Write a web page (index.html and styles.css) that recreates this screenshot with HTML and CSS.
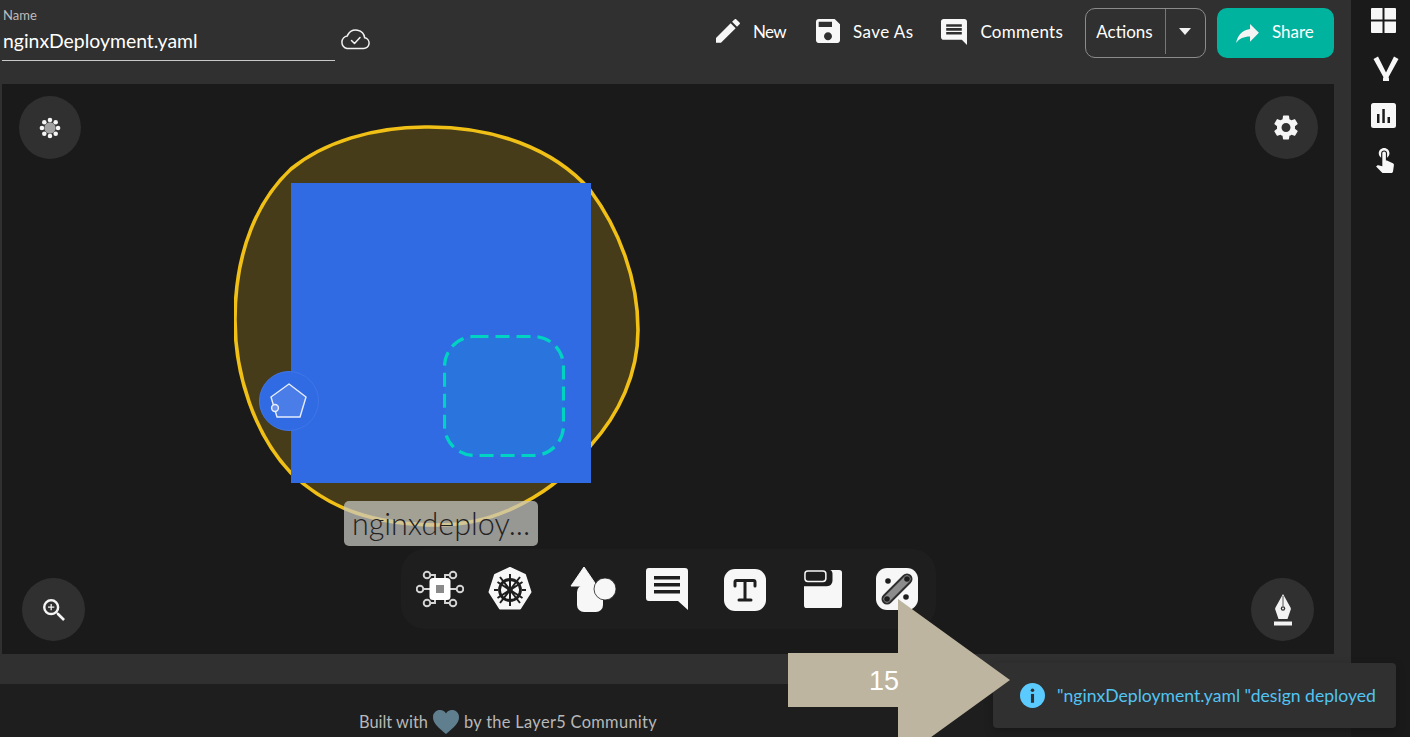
FILE: index.html
```html
<!DOCTYPE html>
<html lang="en">
<head>
<meta charset="utf-8">
<title>nginxDeployment.yaml</title>
<link rel="stylesheet" href="styles.css">
</head>
<body>
<div class="app">
  <main class="main">
    <header class="header">
      <div class="name-field">
        <label class="name-label">Name</label>
        <div class="name-value">nginxDeployment.yaml</div>
      </div>
      <svg class="cloud" viewBox="0 0 30 22" fill="none" stroke="#f2f2f2" stroke-width="1.5" stroke-linecap="round" stroke-linejoin="round"><path d="M7 20.5h16.5a5.4 5.4 0 0 0 1.2-10.7A9 9 0 0 0 8 6.5c-.3.5-.5 1-.6 1.4A6.4 6.4 0 0 0 7 20.5z"/><path d="M11.5 12.5l3 3 5.500-6"/></svg>
      <div class="spacer"></div>
      <nav class="actions">
        <button class="action act-new"><svg class="ic" viewBox="3 3 18.1 18.1"><path d="M3 17.25V21h3.75L17.81 9.94l-3.75-3.75L3 17.25zM20.71 7.04a1 1 0 0 0 0-1.41l-2.34-2.34a1 1 0 0 0-1.41 0l-1.83 1.83 3.75 3.75 1.83-1.83z"/></svg><span>New</span></button>
        <button class="action act-save"><svg class="ic" viewBox="3 3 18 18"><path d="M17 3H5c-1.11 0-2 .9-2 2v14c0 1.1.89 2 2 2h14c1.1 0 2-.9 2-2V7l-4-4zm-5 16c-1.66 0-3-1.34-3-3s1.34-3 3-3 3 1.34 3 3-1.34 3-3 3zm3-10H5V5h10v4z"/></svg><span>Save As</span></button>
        <button class="action act-comments"><svg class="ic ic-c" viewBox="2 2 20 20"><path d="M21.99 4c0-1.1-.89-2-1.99-2H4c-1.1 0-2 .9-2 2v12c0 1.1.9 2 2 2h14l4 4-.01-18zM18 14H6v-2h12v2zm0-3H6V9h12v2zm0-3H6V6h12v2z"/></svg><span>Comments</span></button>
      </nav>
      <div class="split">
        <span class="split-main">Actions</span>
        <span class="split-caret"><i class="caret"></i></span>
      </div>
      <button class="share"><svg class="ic-share" viewBox="3 5 18 15"><path d="M14 9V5l7 7-7 7v-4.1c-5 0-8.5 1.6-11 5.1 1-5 4-10 11-11z"/></svg><span>Share</span></button>
    </header>

    <section class="canvas">
      <div class="fab fab-tl">
        <svg class="fab-flower" viewBox="0 0 24 24"><g fill="#f5f5f5"><circle cx="12" cy="3.2" r="2.5"/><circle cx="12" cy="20.800" r="2.5"/><circle cx="3.200" cy="12" r="2.5"/><circle cx="20.800" cy="12" r="2.5"/><circle cx="5.800" cy="5.800" r="2.5"/><circle cx="18.200" cy="5.800" r="2.5"/><circle cx="5.800" cy="18.200" r="2.5"/><circle cx="18.200" cy="18.200" r="2.5"/></g><circle cx="12" cy="12" r="6.200" fill="#a0a0a0"/></svg>
      </div>
      <div class="fab fab-tr">
        <svg class="fab-gear" viewBox="2.5 2 19 20"><path d="M19.14 12.94c.04-.3.06-.61.06-.94 0-.32-.02-.64-.07-.94l2.03-1.58a.49.49 0 0 0 .12-.61l-1.92-3.32a.488.488 0 0 0-.59-.22l-2.39.96c-.5-.38-1.03-.7-1.62-.94l-.36-2.54a.484.484 0 0 0-.48-.41h-3.84c-.24 0-.43.17-.47.41l-.36 2.54c-.59.24-1.13.57-1.62.94l-2.39-.96c-.22-.08-.47 0-.59.22L2.74 8.87c-.12.21-.08.47.12.61l2.03 1.58c-.05.3-.09.63-.09.94s.02.64.07.94l-2.03 1.58a.49.49 0 0 0-.12.61l1.92 3.32c.12.22.37.29.59.22l2.39-.96c.5.38 1.03.7 1.62.94l.36 2.54c.05.24.24.41.48.41h3.84c.24 0 .44-.17.47-.41l.36-2.54c.59-.24 1.13-.56 1.62-.94l2.39.96c.22.08.47 0 .59-.22l1.92-3.32c.12-.22.07-.47-.12-.61l-2.01-1.58zM12 15.6c-1.98 0-3.6-1.62-3.6-3.6s1.62-3.6 3.6-3.6 3.6 1.62 3.6 3.6-1.62 3.6-3.6 3.6z"/></svg>
      </div>
      <div class="fab fab-bl">
        <svg class="fab-zoom" viewBox="3 3 17.5 17.5"><path d="M15.5 14h-.79l-.28-.27A6.471 6.471 0 0 0 16 9.5 6.5 6.5 0 1 0 9.5 16c1.61 0 3.09-.59 4.23-1.57l.27.28v.79l5 4.99L20.49 19l-4.99-5zm-6 0C7.01 14 5 11.99 5 9.5S7.01 5 9.5 5 14 7.01 14 9.5 11.99 14 9.5 14z"/><path d="M12 10h-2v2H9v-2H7V9h2V7h1v2h2v1z"/></svg>
      </div>
      <div class="fab fab-br">
        <svg class="fab-pen" viewBox="0 0 22 32"><path fill="#f2f2f2" d="M11 0l7.500 13.500c.5 1 .5 1.700 0 2.700L15.500 25h-9L3.500 16.200c-.5-1-.5-1.700 0-2.700z"/><circle cx="11" cy="14.500" r="2.200" fill="#303030"/><circle cx="11" cy="14.500" r="1" fill="#f2f2f2"/><path d="M11 2v10" stroke="#303030" stroke-width=".8"/><rect x="2" y="27.500" width="18" height="4" fill="#f2f2f2"/></svg>
      </div>

      <svg class="graph" viewBox="0 0 640 470" fill="none">
        <path class="blob" d="M191 43C260 42 320 65 356 106C385 145 404 195 404 246C404 290 385 330 357 361C335 395 275 441 205 441C140 441 95 425 57 389C20 350 1 290 1 236C1 165 25 115 57 85C90 58 140 43 191 43z"/>
      </svg>
      <div class="node-square">
        <svg class="node-dashed" viewBox="0 0 122 122"><rect x="1.500" y="1.500" width="119" height="119" rx="30" fill="#2a74dd" stroke="#00d3c1" stroke-width="3.200" stroke-dasharray="14 7"/></svg>
      </div>
      <div class="node-badge">
        <svg class="node-penta" viewBox="0 0 40 38"><path d="M20 3L37 16 31 36H8L2 16z" fill="#ffffff" fill-opacity=".12" stroke="#e6edfd" stroke-width="1.400" stroke-linejoin="round"/><circle cx="6" cy="27" r="3.400" fill="#6f93ec" stroke="#e6edfd" stroke-width="1.500"/></svg>
      </div>
      <div class="node-label">nginxdeploy...</div>

      <div class="toolbar">
        <svg class="tool t-chip" viewBox="0 0 48 42" fill="none" stroke="#d4d4d4" stroke-width="1.900"><path d="M19 14V7h-5M29 14V7h5M19 28v7h-5M29 28v7h5M14 21H7M34 21h7"/><circle cx="11" cy="7" r="3.300"/><circle cx="37" cy="7" r="3.300"/><circle cx="11" cy="35" r="3.300"/><circle cx="37" cy="35" r="3.300"/><circle cx="4" cy="21" r="3.300"/><circle cx="44" cy="21" r="3.300"/><rect x="13.500" y="10" width="21" height="22" rx="3.500" fill="#fff" stroke="none"/><rect x="20" y="17" width="8" height="8" fill="#8a8a8a" stroke="none"/></svg>
        <svg class="tool t-kube" viewBox="0 0 44 46"><path d="M22 1L37 8 42.500 25 32 41.500H12L1.500 25 7 8z" fill="#f7f7f7" stroke="#f7f7f7" stroke-width="2" stroke-linejoin="round"/><g fill="none" stroke="#1e1e1e"><circle cx="22" cy="23" r="10.500" stroke-width="2.800"/><circle cx="22" cy="23" r="2" stroke-width="1.400"/><path stroke-width="2" d="M22 7v32M9.500 15l25 16M34.500 15l-25 16M6 23h4M34 23h4M12 10l20 26M32 10L12 36"/></g></svg>
        <i class="tool-sep"></i>
        <svg class="tool t-shapes" viewBox="0 0 48 46"><path d="M15 0L28 19H2z" fill="#f7f7f7" stroke="#f7f7f7" stroke-linejoin="round"/><rect x="8" y="18" width="26" height="27" rx="7" fill="#f7f7f7"/><circle cx="36" cy="22" r="11" fill="#f7f7f7" stroke="#1e1e1e" stroke-width=".8"/></svg>
        <svg class="tool t-comment" viewBox="0 0 42 42"><path d="M3 0h36a3 3 0 0 1 3 3v39L32 33H3a3 3 0 0 1-3-3V3a3 3 0 0 1 3-3z" fill="#f7f7f7"/><path d="M8 8h26v3.500H8zM8 15h26v3.500H8zM8 22h26v3.500H8z" fill="#1e1e1e"/></svg>
        <svg class="tool t-text" viewBox="0 0 42 42"><rect width="42" height="42" rx="11" fill="#f7f7f7"/><path d="M11 17v-4c0-1 .5-1.500 1.500-1.500h17c1 0 1.500.5 1.500 1.500v4M21 11.500v19M15 31h12" fill="none" stroke="#1e1e1e" stroke-width="3" stroke-linecap="round"/></svg>
        <svg class="tool t-section" viewBox="0 0 40 40"><path d="M37 0a3 3 0 0 1 3 3v34a3 3 0 0 1-3 3H3a3 3 0 0 1-3-3V17h24c4 0 6-3 6-6V4c0-2-1-4-3-4z" fill="#f7f7f7"/><rect x="1" y="1" width="22" height="11" rx="3" fill="none" stroke="#f7f7f7" stroke-width="1.600"/></svg>
        <svg class="tool t-link" viewBox="0 0 42 42"><rect width="42" height="42" rx="11" fill="#f7f7f7"/><path d="M11 31L31 11" stroke="#2e2e2e" stroke-width="11" stroke-linecap="round"/><path d="M11 31L31 11" stroke="#8c8c8c" stroke-width="7" stroke-linecap="round"/><circle cx="11" cy="31" r="2.800" fill="#1e1e1e"/><circle cx="31" cy="11" r="2.800" fill="#1e1e1e"/><circle cx="12" cy="13" r="2.800" fill="#1e1e1e"/><circle cx="30" cy="29" r="2.800" fill="#1e1e1e"/></svg>
      </div>
    </section>
    <div class="strip"></div>
    <footer class="footer">
      <span>Built with</span>
      <svg class="heart" viewBox="0 0 24 22"><path d="M12 22C5 16 0 12 0 6.500 0 2.500 3 0 6.500 0 9 0 11 1.300 12 3.200 13 1.300 15 0 17.500 0 21 0 24 2.500 24 6.500 24 12 19 16 12 22z"/></svg>
      <span class="footer-by">by the Layer5 Community</span>
    </footer>
  </main>

  <aside class="rail">
    <svg class="rail-ic r-grid" viewBox="0 0 25 25"><path d="M0 1a1 1 0 0 1 1-1h10.500v11.500H0zM13.500 0H24a1 1 0 0 1 1 1v10.500H13.500zM0 13.500h11.500V25H1a1 1 0 0 1-1-1zM13.500 13.500H25V24a1 1 0 0 1-1 1H13.500z"/></svg>
    <svg class="rail-ic r-y" viewBox="0 0 26 26"><path d="M0.500 4L5 1.500 16 23.500V26H11.500V24z"/><path d="M25.500 4L21 1.500 10 23.500V26H14.500V24z"/></svg>
    <svg class="rail-ic r-chart" viewBox="0 0 25 25"><path fill-rule="evenodd" d="M2.500 0h20A2.500 2.500 0 0 1 25 2.500v20a2.500 2.500 0 0 1-2.500 2.500h-20A2.500 2.500 0 0 1 0 22.500v-20A2.500 2.500 0 0 1 2.500 0zM6 11v9h2.500v-9zM11.300 6v14h2.500V6zM16.500 14v6H19v-6z"/></svg>
    <svg class="rail-ic r-touch" viewBox="4.500 3 15.500 21"><path d="M9 11.240V7.500C9 6.120 10.120 5 11.500 5S14 6.120 14 7.500v3.740c1.210-.81 2-2.180 2-3.740C16 5.010 13.990 3 11.500 3S7 5.010 7 7.500c0 1.560.79 2.930 2 3.740zm9.840 4.630l-4.540-2.260c-.17-.07-.35-.11-.54-.11H13v-6c0-.83-.67-1.500-1.500-1.500S10 6.670 10 7.500v10.740l-3.430-.72c-.08-.01-.15-.03-.24-.03-.31 0-.59.13-.79.33l-.79.8 4.940 4.940c.27.27.65.44 1.060.44h6.790c.75 0 1.330-.55 1.440-1.280l.75-5.270c.01-.07.02-.14.02-.2 0-.62-.38-1.160-.91-1.380z"/></svg>
  </aside>
</div>

<div class="toast">
  <svg class="toast-ic" viewBox="0 0 24 24"><circle cx="12" cy="12" r="12" fill="#5bcbff"/><circle cx="12" cy="7" r="1.700" fill="#303030"/><rect x="10.500" y="10.500" width="3" height="8.500" fill="#303030"/></svg>
  <span>"nginxDeployment.yaml "design deployed</span>
</div>

<svg class="arrow" viewBox="0 0 222 162"><path d="M0 54H110V0L222 81 110 162V108H0z" fill="#bdb5a0"/></svg>
<div class="arrow-num">15</div>
</body>
</html>
```

FILE: styles.css
```css
* { box-sizing: border-box; }
html, body { margin: 0; height: 100%; overflow: hidden; }
body { background: #1e1e1e; font-family: "Lato", "Liberation Sans", sans-serif; color: #fff; }
button { font: inherit; color: inherit; background: none; border: 0; padding: 0; }

.app { display: grid; grid-template-columns: 1351px 59px; height: 737px; }
.main { display: flex; flex-direction: column; background: #303030; }

.header { height: 84px; display: flex; align-items: flex-start; padding: 7px 17px 0 2px; }
.name-field { width: 333px; height: 54px; border-bottom: 1px solid #c8c8c8; padding-left: 1px; }
.name-label { display: block; font-size: 13px; line-height: 16px; color: #bdbdbd; }
.name-value { font-size: 19.4px; line-height: 26px; margin-top: 5px; color: #fff; }
.cloud { width: 30px; height: 22px; margin: 21px 0 0 5px; }
.spacer { flex: 1; }

.actions { display: flex; gap: 28px; height: 50px; margin: 1px 22px 0 0; }
.action { display: flex; align-items: center; gap: 13px; font-size: 17px; height: 46px; }
.act-new span { letter-spacing: -.6px; }
.act-save { margin-left: 2px; }
.act-save span { letter-spacing: .4px; }
.act-comments span { letter-spacing: .25px; }
.ic { width: 24px; height: 24px; fill: #f7f7f7; }
.ic-c { width: 26px; height: 26px; margin-top: 2px; }

.split { display: flex; width: 121px; height: 50px; border: 1px solid #8b8b8b; border-radius: 10px; font-size: 17px; margin-top: 1px; padding-bottom: 3px; }
.split-main { width: 79px; display: flex; align-items: center; justify-content: center; padding-right: 2px; box-shadow: 1px 0 0 #777; }
.split-caret { flex: 1; display: flex; align-items: center; justify-content: center; }
.caret { width: 0; height: 0; border-left: 6px solid transparent; border-right: 6px solid transparent; border-top: 7px solid #f2f2f2; }

.share { width: 117px; height: 50px; margin: 1px 0 0 11px; background: #00b39f; border-radius: 10px; display: flex; align-items: center; gap: 13px; padding: 0 0 3px 19px; font-size: 17px; }
.ic-share { width: 23px; height: 19px; fill: #f4f4f4; margin-top: 3px; }

.canvas { position: relative; height: 570px; margin: 0 17px 0 2px; background: #1a1a1a; overflow: hidden; }
.fab { position: absolute; width: 63px; height: 63px; border-radius: 50%; background: #303030; display: flex; align-items: center; justify-content: center; }
.fab-tl { left: 17px; top: 12px; width: 62px; }
.fab-tr { left: 1253px; top: 12px; }
.fab-bl { left: 20px; top: 494px; }
.fab-br { left: 1249px; top: 494px; }
.fab-flower { width: 22px; height: 22px; }
.fab-gear { width: 24px; height: 25px; fill: #f5f5f5; margin-right: 1px; }
.fab-zoom { width: 22px; height: 22px; fill: #f5f5f5; }
.fab-pen { width: 22px; height: 32px; }

.graph { position: absolute; left: 232px; top: 0; width: 640px; height: 470px; }
.blob { fill: #473c1a; stroke: #f0c016; stroke-width: 3.6; }
.node-square { position: absolute; left: 289px; top: 99px; width: 300px; height: 300px; background: #316be4; }
.node-dashed { position: absolute; left: 152px; top: 152px; width: 122px; height: 122px; }
.node-badge { position: absolute; left: 257px; top: 287px; width: 60px; height: 60px; border-radius: 50%; background: #316be4; border: 1px solid #3f76e8; display: flex; align-items: center; justify-content: center; }
.node-penta { width: 40px; height: 38px; margin: 0 0 2px 0; }
.node-label { position: absolute; left: 342px; top: 417px; width: 194px; height: 45px; border-radius: 5px; background: rgba(200, 200, 195, .72); color: #222; font-size: 30.5px; line-height: 45px; text-align: center; font-weight: 300; }

.toolbar { position: absolute; left: 399px; top: 465px; width: 535px; height: 80px; background: #1e1e1e; border-radius: 24px; }
.tool { position: absolute; }
.t-chip { left: 15px; top: 19px; width: 48px; height: 42px; }
.t-kube { left: 87px; top: 18px; width: 44px; height: 46px; }
.tool-sep { left: 150px; top: 10px; width: 1px; height: 60px; background: #3b4a58; }
.t-shapes { left: 168px; top: 18px; width: 48px; height: 46px; }
.t-comment { left: 245px; top: 19px; width: 42px; height: 42px; }
.t-text { left: 323px; top: 20px; width: 42px; height: 42px; }
.t-section { left: 402px; top: 21px; width: 40px; height: 38px; }
.t-link { left: 475px; top: 19px; width: 42px; height: 42px; }

.strip { height: 30px; background: #303030; }
.footer { flex: 1; background: #1e1e1e; display: flex; align-items: center; gap: 5px; padding: 22px 0 0 359px; font-size: 16.4px; color: #b8b8b8; }
.footer-by { letter-spacing: .33px; }
.heart { width: 26px; height: 24px; fill: #5f7f8f; }

.rail { background: #1a1a1a; position: relative; display: flex; flex-direction: column; align-items: flex-start; padding: 8px 0 0 20px; }
.rail-ic { fill: #f7f7f7; display: block; }
.r-grid { width: 25px; height: 25px; }
.r-y { width: 26px; height: 26px; margin: 22px 0 0 2px; }
.r-chart { width: 25px; height: 25px; margin-top: 22px; }
.r-touch { width: 20px; height: 25px; margin: 20px 0 0 4px; }

.toast { position: absolute; left: 993px; top: 663px; width: 403px; height: 65px; background: #303030; border-radius: 4px; display: flex; align-items: center; padding: 0 0 0 27px; gap: 12px; color: #52c4f2; font-size: 17.6px; box-shadow: 0 3px 8px rgba(0, 0, 0, .25); }
.toast-ic { width: 25px; height: 25px; flex: none; }

.arrow { position: absolute; left: 788px; top: 599px; width: 222px; height: 162px; }
.arrow-num { position: absolute; left: 869px; top: 665px; font-family: "Liberation Sans", sans-serif; font-size: 27px; line-height: 32px; color: #fff; }
```
